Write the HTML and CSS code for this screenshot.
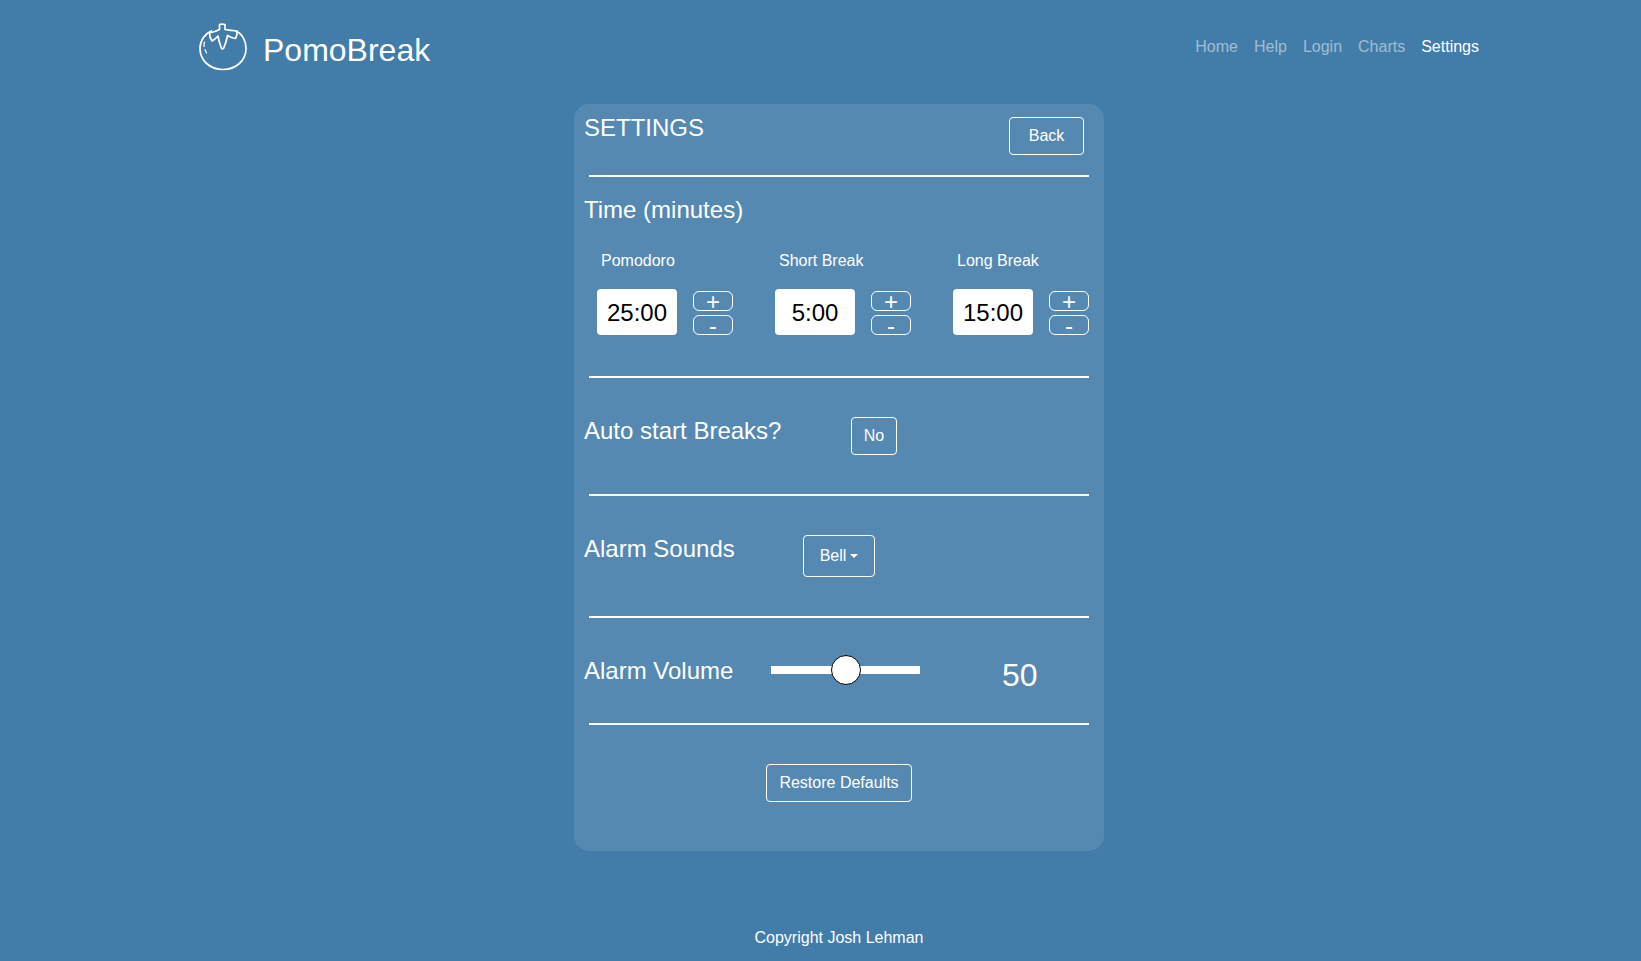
FILE: index.html
```html
<!DOCTYPE html>
<html lang="en">
<head>
<meta charset="utf-8">
<title>PomoBreak</title>
<link rel="stylesheet" href="styles.css">
</head>
<body>
<div class="page">
  <header class="topbar">
    <a class="brand" href="#">
      <svg class="logo" viewBox="9 7 50 52" width="50" height="52" fill="none" stroke="#fff" stroke-width="1.7" stroke-linecap="round" stroke-linejoin="round">
        <path d="M21.5 16C15 18.5 10 25.5 10 33.5C10 45.5 20 54.5 33 54.5C46 54.5 56 45.5 56 33.5C56 25.5 52 18.5 45.5 15.8"/>
        <path d="M29.5 9.5Q32 8.7 35 9.5L35 14.5Q41 15.5 47 16Q47.5 20 45.5 23.5Q41.5 23 37.5 20.5Q36.5 27 33.5 33.5Q32.5 34.5 31.5 33.5Q29 27 28 21Q25 24.5 22 26Q19.5 22.5 19.5 18Q25 17 29.5 14.5Z"/>
        <path d="M14.5 27C14 28.5 13.8 30 14 31.5M15 34.5L16.5 38" stroke-width="1.2"/>
      </svg>
      <span class="brand-name">PomoBreak</span>
    </a>
    <nav class="nav">
      <a href="#">Home</a>
      <a href="#">Help</a>
      <a href="#">Login</a>
      <a href="#">Charts</a>
      <a class="active" href="#">Settings</a>
    </nav>
  </header>

  <main class="card">
    <section class="row head-row">
      <h2>SETTINGS</h2>
      <button class="btn back">Back</button>
    </section>
    <hr>
    <section class="time-section">
      <h2>Time (minutes)</h2>
      <div class="timers">
        <div class="timer">
          <div class="timer-label">Pomodoro</div>
          <div class="timer-controls">
            <input class="time-input" type="text" value="25:00">
            <div class="steppers"><button class="step">+</button><button class="step">-</button></div>
          </div>
        </div>
        <div class="timer">
          <div class="timer-label">Short Break</div>
          <div class="timer-controls">
            <input class="time-input" type="text" value="5:00">
            <div class="steppers"><button class="step">+</button><button class="step">-</button></div>
          </div>
        </div>
        <div class="timer">
          <div class="timer-label">Long Break</div>
          <div class="timer-controls">
            <input class="time-input" type="text" value="15:00">
            <div class="steppers"><button class="step">+</button><button class="step">-</button></div>
          </div>
        </div>
      </div>
    </section>
    <hr>
    <section class="row auto-row">
      <h2>Auto start Breaks?</h2>
      <button class="btn toggle">No</button>
    </section>
    <hr>
    <section class="row sound-row">
      <h2>Alarm Sounds</h2>
      <button class="btn dropdown">Bell<span class="caret"></span></button>
    </section>
    <hr>
    <section class="row volume-row">
      <h2>Alarm Volume</h2>
      <input class="slider" type="range" min="0" max="100" value="50">
      <span class="volume-value">50</span>
    </section>
    <hr>
    <section class="restore-row">
      <button class="btn restore">Restore Defaults</button>
    </section>
  </main>

  <footer class="footer">Copyright Josh Lehman</footer>
</div>
</body>
</html>
```

FILE: styles.css
```css
* {
  box-sizing: border-box;
}

html, body {
  margin: 0;
  height: 100%;
  overflow: hidden;
}

body {
  background: #427ca9;
  color: #fff;
  font-family: "Liberation Sans", Arial, sans-serif;
  font-size: 16px;
  line-height: 1.5;
}

.page {
  width: 1678px;
  display: flex;
  flex-direction: column;
  align-items: center;
}

.topbar {
  width: 1280px;
  height: 104px;
  display: flex;
  justify-content: space-between;
  align-items: flex-start;
}

.brand {
  display: flex;
  align-items: center;
  gap: 14px;
  margin-top: 22px;
  color: #fff;
  text-decoration: none;
}

.brand-name {
  font-size: 32px;
  line-height: 48px;
  margin-top: 4px;
}

.nav {
  display: flex;
  gap: 16px;
  margin-top: 35px;
}

.nav a {
  color: rgba(255, 255, 255, 0.5);
  text-decoration: none;
}

.nav a.active {
  color: #fff;
}

.card {
  width: 530px;
  height: 747px;
  background: #5589b1;
  border-radius: 15px;
}

h2 {
  margin: 0;
  font-size: 24px;
  font-weight: 400;
  line-height: 28.8px;
}

hr {
  height: 2px;
  margin: 0 15px;
  border: 0;
  background: #fff;
}

.row {
  display: flex;
  align-items: flex-start;
  padding-left: 10px;
}

.btn {
  height: 38px;
  padding: 0;
  background: transparent;
  border: 1px solid #fff;
  border-radius: 4px;
  color: #fff;
  font: inherit;
}

.head-row {
  height: 71px;
  justify-content: space-between;
  padding-top: 10px;
  padding-right: 20px;
}

.back {
  width: 75px;
  margin-top: 3px;
}

.time-section {
  height: 199px;
  padding: 19px 0 0 10px;
}

.timers {
  display: flex;
  margin-top: 24px;
  padding-left: 13px;
}

.timer {
  flex: none;
  width: 178px;
}

.timer-label {
  padding-left: 4px;
  height: 24px;
}

.timer-controls {
  display: flex;
  align-items: flex-end;
  gap: 16px;
  margin-top: 16px;
}

.time-input {
  width: 80px;
  height: 46px;
  padding: 2px 0 0;
  border: 0;
  border-radius: 4px;
  background: #fff;
  color: #000;
  font: 24px "Liberation Sans", Arial, sans-serif;
  text-align: center;
}

.steppers {
  display: flex;
  flex-direction: column;
  gap: 4px;
}

.step {
  width: 40px;
  height: 20px;
  padding: 2px 0 0;
  background: transparent;
  border: 1px solid #fff;
  border-radius: 6px;
  color: #fff;
  font: 24px/16px "Liberation Sans", Arial, sans-serif;
}

.auto-row,
.sound-row,
.volume-row {
  padding-top: 39px;
}

.auto-row {
  height: 116px;
}

.auto-row h2 {
  width: 267px;
}

.toggle {
  width: 46px;
}

.sound-row {
  height: 120px;
}

.sound-row h2 {
  width: 219px;
}

.dropdown {
  width: 72px;
  height: 42px;
}

.caret {
  display: inline-block;
  margin-left: 4px;
  vertical-align: 3px;
  border-top: 4px solid #fff;
  border-left: 4px solid transparent;
  border-right: 4px solid transparent;
}

.volume-row {
  height: 105px;
}

.volume-row h2 {
  width: 187px;
}

.slider {
  width: 149px;
  height: 8px;
  margin: 9px 0 0;
  appearance: none;
  -webkit-appearance: none;
  background: #fff;
  outline: 0;
}

.slider::-webkit-slider-thumb {
  -webkit-appearance: none;
  width: 30px;
  height: 30px;
  border: 1px solid #000;
  border-radius: 50%;
  background: #fff;
}

.volume-value {
  margin: -1px 0 0 82px;
  font-size: 32px;
  line-height: 38px;
}

.restore-row {
  display: flex;
  justify-content: center;
  padding-top: 39px;
}

.restore {
  width: 146px;
}

.footer {
  margin-top: 75px;
  text-align: center;
}
```
